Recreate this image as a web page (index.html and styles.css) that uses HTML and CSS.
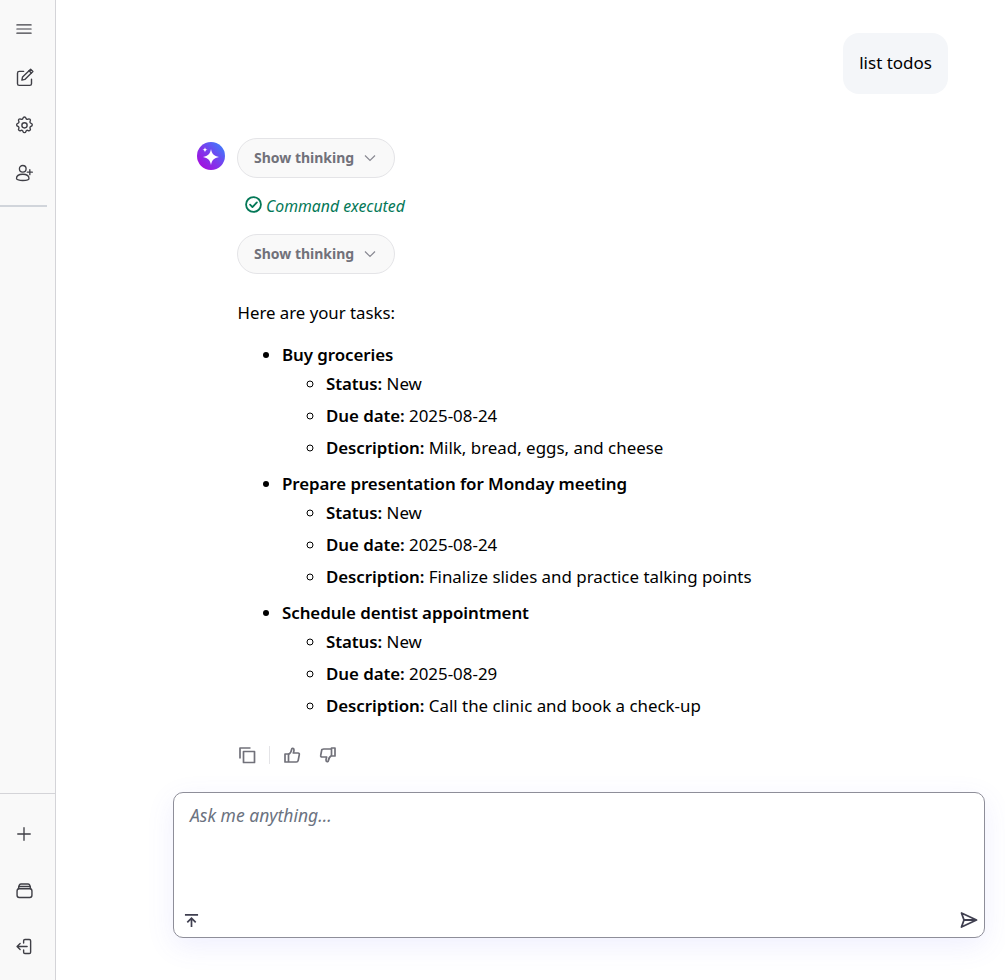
FILE: index.html
```html
<!DOCTYPE html>
<html lang="en">
<head>
<meta charset="utf-8">
<title>Chat</title>
<link rel="stylesheet" href="styles.css">
</head>
<body>
<div class="app">
  <aside class="sidebar">
    <div class="side-top">
      <button class="side-btn"><svg class="ic menu" viewBox="0 0 24 24"><path d="M2.500 6.500h19M2.500 12h19M2.500 17.500h19"/></svg></button>
      <button class="side-btn"><svg class="ic big" viewBox="0 0 24 24"><path d="M11 5H6a2 2 0 0 0-2 2v12a2 2 0 0 0 2 2h12a2 2 0 0 0 2-2v-5"/><path d="M9 15l.8-3.600L19 2.500l2.600 2.600-9.200 9.100z"/><path d="M17.200 4.300l2.600 2.600"/></svg></button>
      <button class="side-btn"><svg class="ic big" viewBox="0 0 24 24"><path d="M10.300 3.600c.4-1.700 2.900-1.700 3.300 0a1.700 1.700 0 0 0 2.600 1.100c1.500-.9 3.200.8 2.300 2.300a1.700 1.700 0 0 0 1.100 2.600c1.700.4 1.700 2.900 0 3.300a1.700 1.700 0 0 0-1.100 2.600c.9 1.500-.8 3.200-2.300 2.300a1.700 1.700 0 0 0-2.600 1.100c-.4 1.700-2.900 1.700-3.300 0a1.700 1.700 0 0 0-2.600-1.100c-1.500.9-3.200-.8-2.300-2.300a1.700 1.700 0 0 0-1.100-2.600c-1.700-.4-1.700-2.900 0-3.300A1.700 1.700 0 0 0 5.400 7c-.9-1.500.8-3.200 2.300-2.300a1.700 1.700 0 0 0 2.600-1.100z"/><circle cx="12" cy="11.800" r="3"/></svg></button>
      <button class="side-btn"><svg class="ic" viewBox="0 0 24 24"><circle cx="10.500" cy="7" r="4"/><path d="M3 18.500c0-3 3.200-5 7.500-5s7.500 2 7.500 5c0 1.600-3.400 2.500-7.500 2.500S3 20.100 3 18.500z"/><path d="M19 8v6M16 11h6"/></svg></button>
    </div>
    <div class="side-rule"></div>
    <div class="side-bottom">
      <button class="side-btn tall"><svg class="ic" viewBox="0 0 24 24"><path d="M12 4.500v15M4.500 12h15"/></svg></button>
      <button class="side-btn tall"><svg class="ic big" viewBox="0 0 24 24"><rect x="3.500" y="10" width="17" height="10" rx="2.500"/><path d="M5 10l1-4a2 2 0 0 1 2-1.500h8a2 2 0 0 1 2 1.500l1 4"/><path d="M5.500 7.500h13"/></svg></button>
      <button class="side-btn tall"><svg class="ic big" viewBox="0 0 24 24"><path d="M11 8V5.500A1.500 1.500 0 0 1 12.500 4h5A1.500 1.500 0 0 1 19 5.500v13a1.500 1.500 0 0 1-1.500 1.500h-5a1.500 1.500 0 0 1-1.500-1.500V16"/><path d="M15 12H4M7 8.500L3.500 12 7 15.500"/></svg></button>
    </div>
  </aside>
  <main class="main">
    <section class="thread">
      <div class="user-row"><div class="bubble">list todos</div></div>
      <div class="reply">
        <div class="avatar"><svg viewBox="0 0 28 28" class="spark"><path d="M14 7c.9 5 3 7 8 8-5 1-7.100 3-8 8-.9-5-3-7-8-8 5-1 7.100-3 8-8z"/><path d="M8 5.200c.3 1.700.9 2.300 2.600 2.600-1.700.3-2.300.9-2.600 2.600-.3-1.700-.9-2.300-2.600-2.600 1.700-.3 2.300-.9 2.600-2.600z"/></svg></div>
        <div class="reply-body">
          <button class="chip"><span class="chip-text">Show thinking</span><svg class="chev" viewBox="0 0 12 12"><path d="M1 3.500l5 5 5-5"/></svg></button>
          <div class="status"><svg class="check" viewBox="0 0 16 16"><circle cx="8" cy="8" r="7"/><path d="M4.800 8.200l2.200 2.200 4.200-4.400"/></svg><span>Command executed</span></div>
          <button class="chip"><span class="chip-text">Show thinking</span><svg class="chev" viewBox="0 0 12 12"><path d="M1 3.500l5 5 5-5"/></svg></button>
          <p class="intro">Here are your tasks:</p>
          <ul class="tasks">
            <li><strong>Buy groceries</strong>
              <ul class="sub">
                <li><strong>Status:</strong> New</li>
                <li><strong>Due date:</strong> 2025-08-24</li>
                <li><strong>Description:</strong> Milk, bread, eggs, and cheese</li>
              </ul>
            </li>
            <li><strong>Prepare presentation for Monday meeting</strong>
              <ul class="sub">
                <li><strong>Status:</strong> New</li>
                <li><strong>Due date:</strong> 2025-08-24</li>
                <li><strong>Description:</strong> Finalize slides and practice talking points</li>
              </ul>
            </li>
            <li><strong>Schedule dentist appointment</strong>
              <ul class="sub">
                <li><strong>Status:</strong> New</li>
                <li><strong>Due date:</strong> 2025-08-29</li>
                <li><strong>Description:</strong> Call the clinic and book a check-up</li>
              </ul>
            </li>
          </ul>
          <div class="actions">
            <svg class="act" viewBox="0 0 18 18"><path d="M12.500 2H2v10.500"/><rect x="5.500" y="5.500" width="11" height="11"/></svg>
            <span class="act-sep"></span>
            <svg class="act" viewBox="0 0 18 18"><path d="M5.500 8H2v8h3.500zM5.500 8.500c1.500-1 3-3 3.200-5.500.1-1 2.300-1 2.300 1 0 1.200-.4 2-.7 3H15c1 0 1.500.8 1.300 1.600l-1.100 5.800c-.2 1-1 1.600-1.900 1.600H5.500"/></svg>
            <svg class="act" viewBox="0 0 18 18"><path d="M12.500 10H16V2h-3.500zM12.500 9.500c-1.500 1-3 3-3.200 5.500-.1 1-2.300 1-2.300-1 0-1.200.4-2 .7-3H3c-1 0-1.500-.8-1.300-1.600l1.100-5.800C3 3.600 3.800 3 4.700 3h7.800"/></svg>
          </div>
        </div>
      </div>
    </section>
    <section class="composer">
      <div class="placeholder">Ask me anything...</div>
      <div class="composer-foot">
        <svg class="tool" viewBox="0 0 16 16"><path d="M1 2h14M8 15V5.500M3.500 10L8 5.500l4.500 4.500"/></svg>
        <svg class="send" viewBox="0 0 18 18"><path d="M1.500 2l15 7-15 7 2.500-7zM4 9h12"/></svg>
      </div>
    </section>
  </main>
</div>
</body>
</html>
```
FILE: styles.css
```css
* { box-sizing: border-box; }
html, body { margin: 0; height: 100%; background: #fff; }
body { font-family: "Noto Sans", "Open Sans", sans-serif; color: #000; overflow: hidden; }
button { font: inherit; background: none; border: 0; padding: 0; }

.app { display: flex; height: 980px; }

.sidebar {
  width: 56px; flex: none; display: flex; flex-direction: column;
  background: #f9f9f9; border-right: 1px solid #d4d4d8;
}
.side-top { display: flex; flex-direction: column; padding-top: 5px; height: 205px; }
.side-btn { width: 48px; height: 48px; display: flex; align-items: center; justify-content: center; flex: none; }
.side-btn.tall { height: 56px; }
.side-rule { width: 47px; height: 2px; background: #d1d5db; }
.side-bottom {
  margin-top: auto; border-top: 1px solid #d4d4d8; height: 187px; width: 55px;
  display: flex; flex-direction: column; padding-top: 12px;
}
.ic { width: 20px; height: 20px; fill: none; stroke: #3f3f46; stroke-width: 1.600; stroke-linecap: round; stroke-linejoin: round; }
.ic.big { width: 21px; height: 21px; }
.ic.menu { width: 18px; height: 18px; }

.main { flex: 1; display: flex; flex-direction: column; min-width: 0; }
.thread { flex: 1; padding: 33px 57px 0 141px; }
.user-row { display: flex; justify-content: flex-end; }
.bubble { background: #f4f6f9; border-radius: 16px; padding: 15px 16px 16px; height: 61px; font-size: 17px; line-height: 29px; }

.reply { display: flex; gap: 12px; margin-top: 44px; }
.avatar {
  width: 28px; height: 28px; margin-top: 4px; border-radius: 50%; flex: none;
  background: linear-gradient(45deg, #b100d8 0%, #7c3aed 50%, #2f8cff 100%);
}
.spark { width: 28px; height: 28px; display: block; fill: #fff; }
.reply-body { flex: 1; min-width: 0; }

.chip {
  display: flex; align-items: center; gap: 10px; height: 40px; width: 158px; padding-left: 16px;
  border: 1px solid #e4e4e7; border-radius: 20px; background: #f9f9f9;
  font-size: 14px; font-weight: 700; color: #71717a;
}
.chip-text { margin-top: -2px; }
.chev { width: 12px; height: 12px; fill: none; stroke: #8a8a93; stroke-width: 1.200; margin-top: -1px; }

.status { display: flex; align-items: center; gap: 4px; height: 56px; padding-left: 8px; color: #047857; font-size: 15.800px; font-style: italic; }
.check { width: 17px; height: 17px; margin-top: -3px; fill: none; stroke: #047857; stroke-width: 1.700; stroke-linecap: round; stroke-linejoin: round; }

.intro { margin: 25px 0 0 0.500px; font-size: 16.800px; line-height: 28px; }
.tasks { margin: 16px 0 0; padding-left: 45px; font-size: 16.900px; line-height: 24px; list-style: disc; }
.tasks > li + li { margin-top: 12px; }
.sub { margin: 5px 0 0; padding-left: 44px; list-style: circle; }
.sub li + li { margin-top: 8px; }
strong { font-weight: 600; letter-spacing: -0.07px; }

.actions { display: flex; align-items: center; margin-top: 28px; padding-left: 1px; height: 18px; }
.act { width: 18px; height: 18px; fill: none; stroke: #71717a; stroke-width: 1.700; stroke-linejoin: round; }
.act-sep { width: 1px; height: 18px; background: #e4e4e7; margin: 0 13px 0 13px; }
.act + .act { margin-left: 18px; }

.composer {
  flex: none; height: 146px; margin: 0 20px 42px 117px; padding: 10px 16px 8px;
  border: 1px solid #8e8e99; border-radius: 10px; background: #fff;
  box-shadow: 0 8px 28px rgba(99, 102, 241, 0.1);
  display: flex; flex-direction: column; justify-content: space-between;
}
.placeholder { font-size: 17.500px; line-height: 24px; font-style: italic; color: #6b7280; }
.composer-foot { display: flex; justify-content: space-between; align-items: flex-end; margin: 0 -10px 0 -6px; }
.tool { width: 15px; height: 15px; fill: none; stroke: #3f3f50; stroke-width: 1.800; margin-bottom: 1px; }
.send { width: 18px; height: 18px; fill: none; stroke: #3f3f50; stroke-width: 1.800; stroke-linejoin: round; }
```
